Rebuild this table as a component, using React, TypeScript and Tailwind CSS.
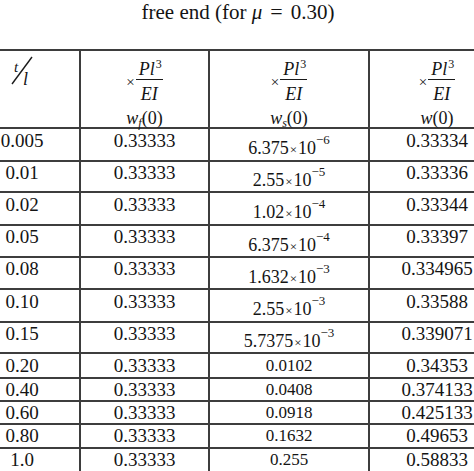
import React from "react"

type Exp = { b: string; e: string }
type Cell = string | Exp

const rows: { h: number; c: Cell[] }[] = [
  { h: 31, c: ["0.005", "0.33333", { b: "6.375", e: "−6" }, "0.33334"] },
  { h: 29, c: ["0.01", "0.33333", { b: "2.55", e: "−5" }, "0.33336"] },
  { h: 31, c: ["0.02", "0.33333", { b: "1.02", e: "−4" }, "0.33344"] },
  { h: 30, c: ["0.05", "0.33333", { b: "6.375", e: "−4" }, "0.33397"] },
  { h: 30, c: ["0.08", "0.33333", { b: "1.632", e: "−3" }, "0.334965"] },
  { h: 31, c: ["0.10", "0.33333", { b: "2.55", e: "−3" }, "0.33588"] },
  { h: 29, c: ["0.15", "0.33333", { b: "5.7375", e: "−3" }, "0.339071"] },
  { h: 23, c: ["0.20", "0.33333", "0.0102", "0.34353"] },
  { h: 21, c: ["0.40", "0.33333", "0.0408", "0.374133"] },
  { h: 21, c: ["0.60", "0.33333", "0.0918", "0.425133"] },
  { h: 22, c: ["0.80", "0.33333", "0.1632", "0.49653"] },
  { h: 22, c: ["1.0", "0.33333", "0.255", "0.58833"] },
]

const Fraction = ({ sub }: { sub?: string }) => (
  <div className="flex flex-col items-center pt-[10px]">
    <div className="flex items-center">
      <span className="text-[15px] leading-none mr-[1px] mt-[2px]">×</span>
      <div className="flex flex-col items-center">
        <span className="italic text-[18px] leading-[16px] h-[16px] pl-[2px]">
          Pl
          <span className="not-italic text-[12px] relative -top-[7px] ml-[1px]">3</span>
        </span>
        <div className="h-px w-[27px] bg-[#1a1a1a] mt-[2px]" />
        <span className="italic text-[18px] leading-[16px] h-[16px] mt-[6px]">EI</span>
      </div>
    </div>
    <span className="text-[18px] leading-[17px] h-[17px] mt-[8px]">
      <span className="italic">w</span>
      {sub && <span className="italic text-[12px] relative top-[3px]">{sub}</span>}
      (0)
    </span>
  </div>
)

const ExpValue = ({ v }: { v: Exp }) => (
  <span className="flex items-start">
    <span className="text-[18px] leading-[21px] mt-[9px]">
      {v.b}
      <span className="text-[13px] mx-[1px]">×</span>
      10
    </span>
    <span className="text-[13px] leading-[15px] mt-[3px]">{v.e}</span>
  </span>
)

export default function App() {
  return (
    <div
      className="w-[474px] h-[471px] overflow-hidden bg-white text-[#141414]"
      style={{ fontFamily: '"Liberation Serif", "Times New Roman", serif' }}
    >
      <div className="h-[49px] flex justify-center text-[21px] leading-[24px] pl-[2px]">
        <span>
          free end (for <span className="italic">μ</span>
          <span className="mx-[8px] text-[22px]">=</span>0.30)
        </span>
      </div>

      <div
        className="-ml-[35px] w-max grid grid-cols-[114px_127px_158px_134px] gap-[2px] pt-[2px] bg-[#3d3d3d]"
        style={{ gridTemplateRows: `76px ${rows.map((r) => r.h + "px").join(" ")}` }}
      >
        <div className="bg-white">
          <div className="ml-[46px] mt-[5px] relative w-[23px] h-[29px]">
            <svg width="23" height="29" className="absolute left-0 top-0">
              <line x1="1" y1="28" x2="21" y2="1" stroke="#1a1a1a" strokeWidth="1.4" />
            </svg>
            <span className="absolute left-[3px] top-[4px] italic text-[15px] leading-none">t</span>
            <span className="absolute left-[12px] top-[14px] italic text-[18px] leading-none">l</span>
          </div>
        </div>
        <div className="bg-white">
          <Fraction sub="f" />
        </div>
        <div className="bg-white">
          <Fraction sub="s" />
        </div>
        <div className="bg-white">
          <Fraction />
        </div>

        {rows.map((r, i) => {
          const tall = r.c.some((c) => typeof c !== "string")
          return r.c.map((c, j) => (
            <div
              key={i + "-" + j}
              className={
                "bg-white flex items-center justify-center leading-[22px] " +
                (tall && typeof c === "string" ? "pb-[8px] " : "") +
                (j === 2 ? "text-[17px]" : "text-[19px]")
              }
            >
              {typeof c === "string" ? c : <ExpValue v={c} />}
            </div>
          ))
        })}
      </div>
    </div>
  )
}
